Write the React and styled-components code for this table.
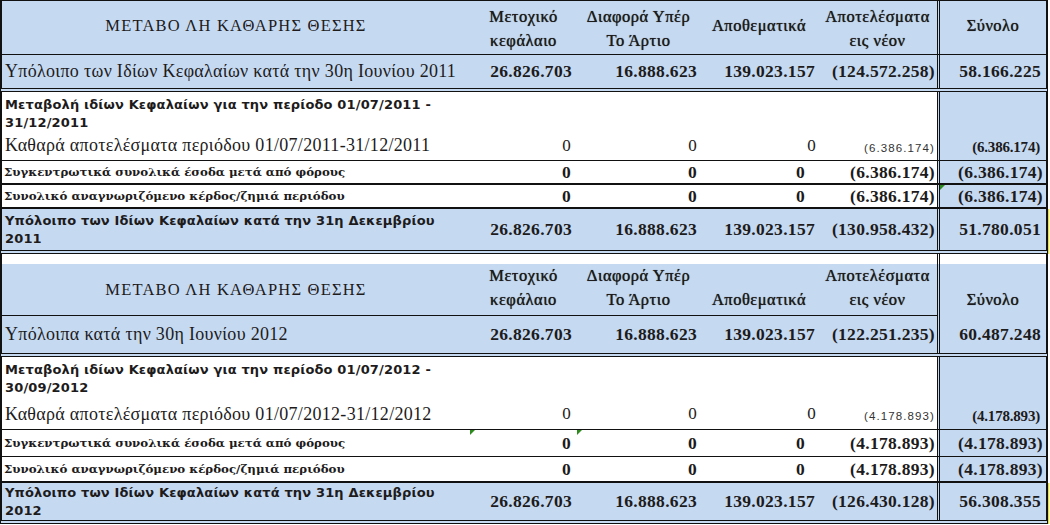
import React from "react";
import styled, { createGlobalStyle, css } from "styled-components";

const GlobalStyle = createGlobalStyle`
  html, body {
    margin: 0;
    padding: 0;
    background: #fff;
  }
  body {
    font-family: "Liberation Serif", "DejaVu Serif", serif;
    color: #1d1b1b;
  }
`;

const BLUE = "#c5d9f1";
const COLS = "468px 107px 123px 118px 119px 109px";

const rules = {
  none: "none",
  thin: "1px solid #111",
  thick: "2px solid #111",
  double: "4px double #111",
};

const Sheet = styled.div`
  width: 1048px;
  display: flex;
  flex-direction: column;
`;

const Row = styled.div`
  display: grid;
  grid-template-columns: ${COLS};
  height: ${(p) => p.$h}px;
  box-sizing: border-box;
  border-left: 2px solid #111;
  border-right: 2px solid #111;
  border-top: ${(p) => (p.$top ? "1px solid #111" : "none")};
  border-bottom: ${(p) => rules[p.$rule || "none"]};
  background: ${(p) => (p.$blue ? BLUE : "transparent")};
  ${(p) =>
    p.$yellow &&
    css`
      box-shadow: 1px 0 0 #f4e400;
    `}
`;

const Cell = styled.div`
  position: relative;
  display: flex;
  flex-direction: column;
  justify-content: ${(p) =>
    p.$valign === "top" ? "flex-start" : p.$valign === "bottom" ? "flex-end" : "center"};
  align-items: ${(p) =>
    p.$align === "center" ? "center" : p.$align === "left" ? "flex-start" : "flex-end"};
  text-align: ${(p) => p.$align || "right"};
  padding: ${(p) => p.$pad || "0 4px 0 0"};
  box-sizing: border-box;
  overflow: visible;
  white-space: nowrap;
  ${(p) =>
    p.$flag &&
    css`
      &::before {
        content: "";
        position: absolute;
        left: 0;
        top: 0;
        width: 0;
        height: 0;
        border-top: 5px solid #2e8b1e;
        border-right: 5px solid transparent;
      }
    `}
`;

const TotalCell = styled(Cell)`
  border-left: 3px double #111;
  background: ${(p) => (p.$plain ? "transparent" : BLUE)};
  padding: ${(p) => p.$pad || "0 2px 0 0"};
`;

const Title = styled.span`
  font-family: "Liberation Serif", serif;
  font-size: 16.5px;
  letter-spacing: 1.2px;
`;

const ColHead = styled.span`
  font-family: "Liberation Serif", serif;
  font-size: 16.5px;
  line-height: 24px;
  letter-spacing: 0.5px;
  text-shadow: 0 0 0.7px #1d1b1b;
`;

const SerifLabel = styled.span`
  font-family: "Liberation Serif", serif;
  font-size: 18px;
  letter-spacing: 0.3px;
  padding-left: 3px;
`;

const SansLabel = styled.span`
  font-family: "DejaVu Sans", "Verdana", sans-serif;
  font-weight: bold;
  font-size: 13px;
  line-height: 18px;
  letter-spacing: 0.15px;
  padding-left: 3px;
  white-space: normal;
`;

const SlabLabel = styled.span`
  font-family: "DejaVu Serif", serif;
  font-weight: bold;
  font-size: 11.8px;
  padding-left: 2px;
`;

const Num = styled.span`
  font-family: "Liberation Serif", serif;
  font-weight: ${(p) => (p.$light ? "normal" : "bold")};
  font-size: ${(p) => p.$size || 17.5}px;
  letter-spacing: ${(p) => (p.$ls !== undefined ? p.$ls : 0.3)}px;
`;

const Tiny = styled.span`
  font-family: "Liberation Sans", Arial, sans-serif;
  font-size: 11.5px;
  letter-spacing: 1.1px;
  color: #333;
  padding-top: 4px;
`;

const Header = ({ single, h }) => {
  // the second table drops its one-line captions to the lower text line
  const twoLine = single ? { $valign: "bottom", $pad: "0 0 5px 0" } : { $pad: "2px 0 0 0" };
  const oneLine = single ? { $valign: "bottom", $pad: "0 0 5px 0" } : { $pad: "0 0 4px 0" };
  return (
    <Row $h={h} $blue $rule="thin" $top={!single}>
      <Cell $align="center" $pad={single ? "0 0 2px 0" : "0 0 4px 0"}>
        <Title>ΜΕΤΑΒΟ ΛΗ ΚΑΘΑΡΗΣ ΘΕΣΗΣ</Title>
      </Cell>
      <Cell $align="center" {...twoLine}>
        <ColHead>
          Μετοχικό
          <br />
          κεφάλαιο
        </ColHead>
      </Cell>
      <Cell $align="center" {...twoLine}>
        <ColHead>
          Διαφορά Υπέρ
          <br />
          Το Άρτιο
        </ColHead>
      </Cell>
      <Cell $align="center" {...oneLine}>
        <ColHead>Αποθεματικά</ColHead>
      </Cell>
      <Cell $align="center" {...twoLine}>
        <ColHead>
          Αποτελέσματα
          <br />
          εις νέον
        </ColHead>
      </Cell>
      <TotalCell $align="center" {...oneLine}>
        <ColHead>Σύνολο</ColHead>
      </TotalCell>
    </Row>
  );
};

const BalanceRow = ({ h, label, values, total, bold, rule, yellow }) => (
  <Row $h={h} $blue $rule={rule} $yellow={yellow}>
    <Cell $align="left" $pad="0">
      {bold ? <SansLabel>{label}</SansLabel> : <SerifLabel>{label}</SerifLabel>}
    </Cell>
    {values.map((v, i) => (
      <Cell key={i} $pad={i === 0 ? "0 5px 0 0" : i === 3 ? "0 2px 0 0" : "0 3px 0 0"}>
        <Num>{v}</Num>
      </Cell>
    ))}
    <TotalCell $pad="0 5px 0 0">
      <Num>{total}</Num>
    </TotalCell>
  </Row>
);

const ChangeHead = ({ h, children }) => (
  <Row $h={h}>
    <Cell $align="left" $valign="top" $pad="4px 0 0 0">
      <SansLabel>{children}</SansLabel>
    </Cell>
    <Cell />
    <Cell />
    <Cell />
    <Cell />
    <TotalCell />
  </Row>
);

const ResultRow = ({ h, label, small, total }) => (
  <Row $h={h} $rule="thin">
    <Cell $align="left" $pad="0">
      <SerifLabel>{label}</SerifLabel>
    </Cell>
    <Cell $pad="0 6px 0 0">
      <Num $light $size={17}>0</Num>
    </Cell>
    <Cell $pad="0 3px 0 0">
      <Num $light $size={17}>0</Num>
    </Cell>
    <Cell $pad="0 2px 0 0">
      <Num $light $size={17}>0</Num>
    </Cell>
    <Cell $pad="0 2px 0 0">
      <Tiny>{small}</Tiny>
    </Cell>
    <TotalCell $pad="4px 6px 0 0">
      <Num $size={15} $ls={-0.2}>{total}</Num>
    </TotalCell>
  </Row>
);

const SumRow = ({ h, label, value, rule, flags = [] }) => (
  <Row $h={h} $rule={rule}>
    <Cell $align="left" $pad="0">
      <SlabLabel>{label}</SlabLabel>
    </Cell>
    <Cell $pad="0 6px 0 0" $flag={flags.includes(1)}>
      <Num>0</Num>
    </Cell>
    <Cell $pad="0 3px 0 0" $flag={flags.includes(2)}>
      <Num>0</Num>
    </Cell>
    <Cell $pad="0 13px 0 0">
      <Num>0</Num>
    </Cell>
    <Cell $pad="0 2px 0 0">
      <Num>{value}</Num>
    </Cell>
    <TotalCell $pad="0 3px 0 0" $flag={flags.includes(5)}>
      <Num>{value}</Num>
    </TotalCell>
  </Row>
);

const Gap = () => (
  <Row $h={10}>
    <Cell />
    <Cell />
    <Cell />
    <Cell />
    <Cell />
    <TotalCell $plain />
  </Row>
);

const periods = [
  {
    opening: "Υπόλοιπο των Ιδίων Κεφαλαίων κατά την 30η Ιουνίου 2011",
    openValues: ["26.826.703", "16.888.623", "139.023.157", "(124.572.258)"],
    openTotal: "58.166.225",
    change: ["Μεταβολή ιδίων Κεφαλαίων για την περίοδο 01/07/2011 -", "31/12/2011"],
    result: "Καθαρά αποτελέσματα περιόδου 01/07/2011-31/12/2011",
    loss: "(6.386.174)",
    closing: ["Υπόλοιπο των Ιδίων Κεφαλαίων κατά την 31η Δεκεμβρίου", "2011"],
    closeValues: ["26.826.703", "16.888.623", "139.023.157", "(130.958.432)"],
    closeTotal: "51.780.051",
  },
  {
    opening: "Υπόλοιπα κατά την 30η Ιουνίου 2012",
    openValues: ["26.826.703", "16.888.623", "139.023.157", "(122.251.235)"],
    openTotal: "60.487.248",
    change: ["Μεταβολή ιδίων Κεφαλαίων για την περίοδο 01/07/2012 -", "30/09/2012"],
    result: "Καθαρά αποτελέσματα περιόδου 01/07/2012-31/12/2012",
    loss: "(4.178.893)",
    closing: ["Υπόλοιπο των Ιδίων Κεφαλαίων κατά την 31η Δεκεμβρίου", "2012"],
    closeValues: ["26.826.703", "16.888.623", "139.023.157", "(126.430.128)"],
    closeTotal: "56.308.355",
  },
];

const Block = ({ p, second }) => (
  <>
    <Header single={second} h={second ? 52 : 55} />
    <BalanceRow
      h={second ? 41 : 37}
      label={p.opening}
      values={p.openValues}
      total={p.openTotal}
      rule="double"
    />
    <ChangeHead h={second ? 42 : 39}>
      {p.change[0]}
      <br />
      {p.change[1]}
    </ChangeHead>
    <ResultRow h={second ? 31 : 30} label={p.result} small={p.loss} total={p.loss} />
    <SumRow
      h={second ? 27 : 24}
      label="Συγκεντρωτικά συνολικά έσοδα μετά από φόρους"
      value={p.loss}
      rule={second ? "thin" : "thick"}
      flags={second ? [1, 2] : []}
    />
    <SumRow
      h={second ? 26 : 24}
      label="Συνολικό αναγνωριζόμενο κέρδος/ζημιά περιόδου"
      value={p.loss}
      rule="thick"
      flags={second ? [] : [5]}
    />
    <BalanceRow
      h={second ? 41 : 45}
      label={
        <>
          {p.closing[0]}
          <br />
          {p.closing[1]}
        </>
      }
      bold
      values={p.closeValues}
      total={p.closeTotal}
      rule="double"
      yellow
    />
  </>
);

export default function App() {
  return (
    <>
      <GlobalStyle />
      <Sheet>
        <Block p={periods[0]} />
        <Gap />
        <Block p={periods[1]} second />
      </Sheet>
    </>
  );
}
